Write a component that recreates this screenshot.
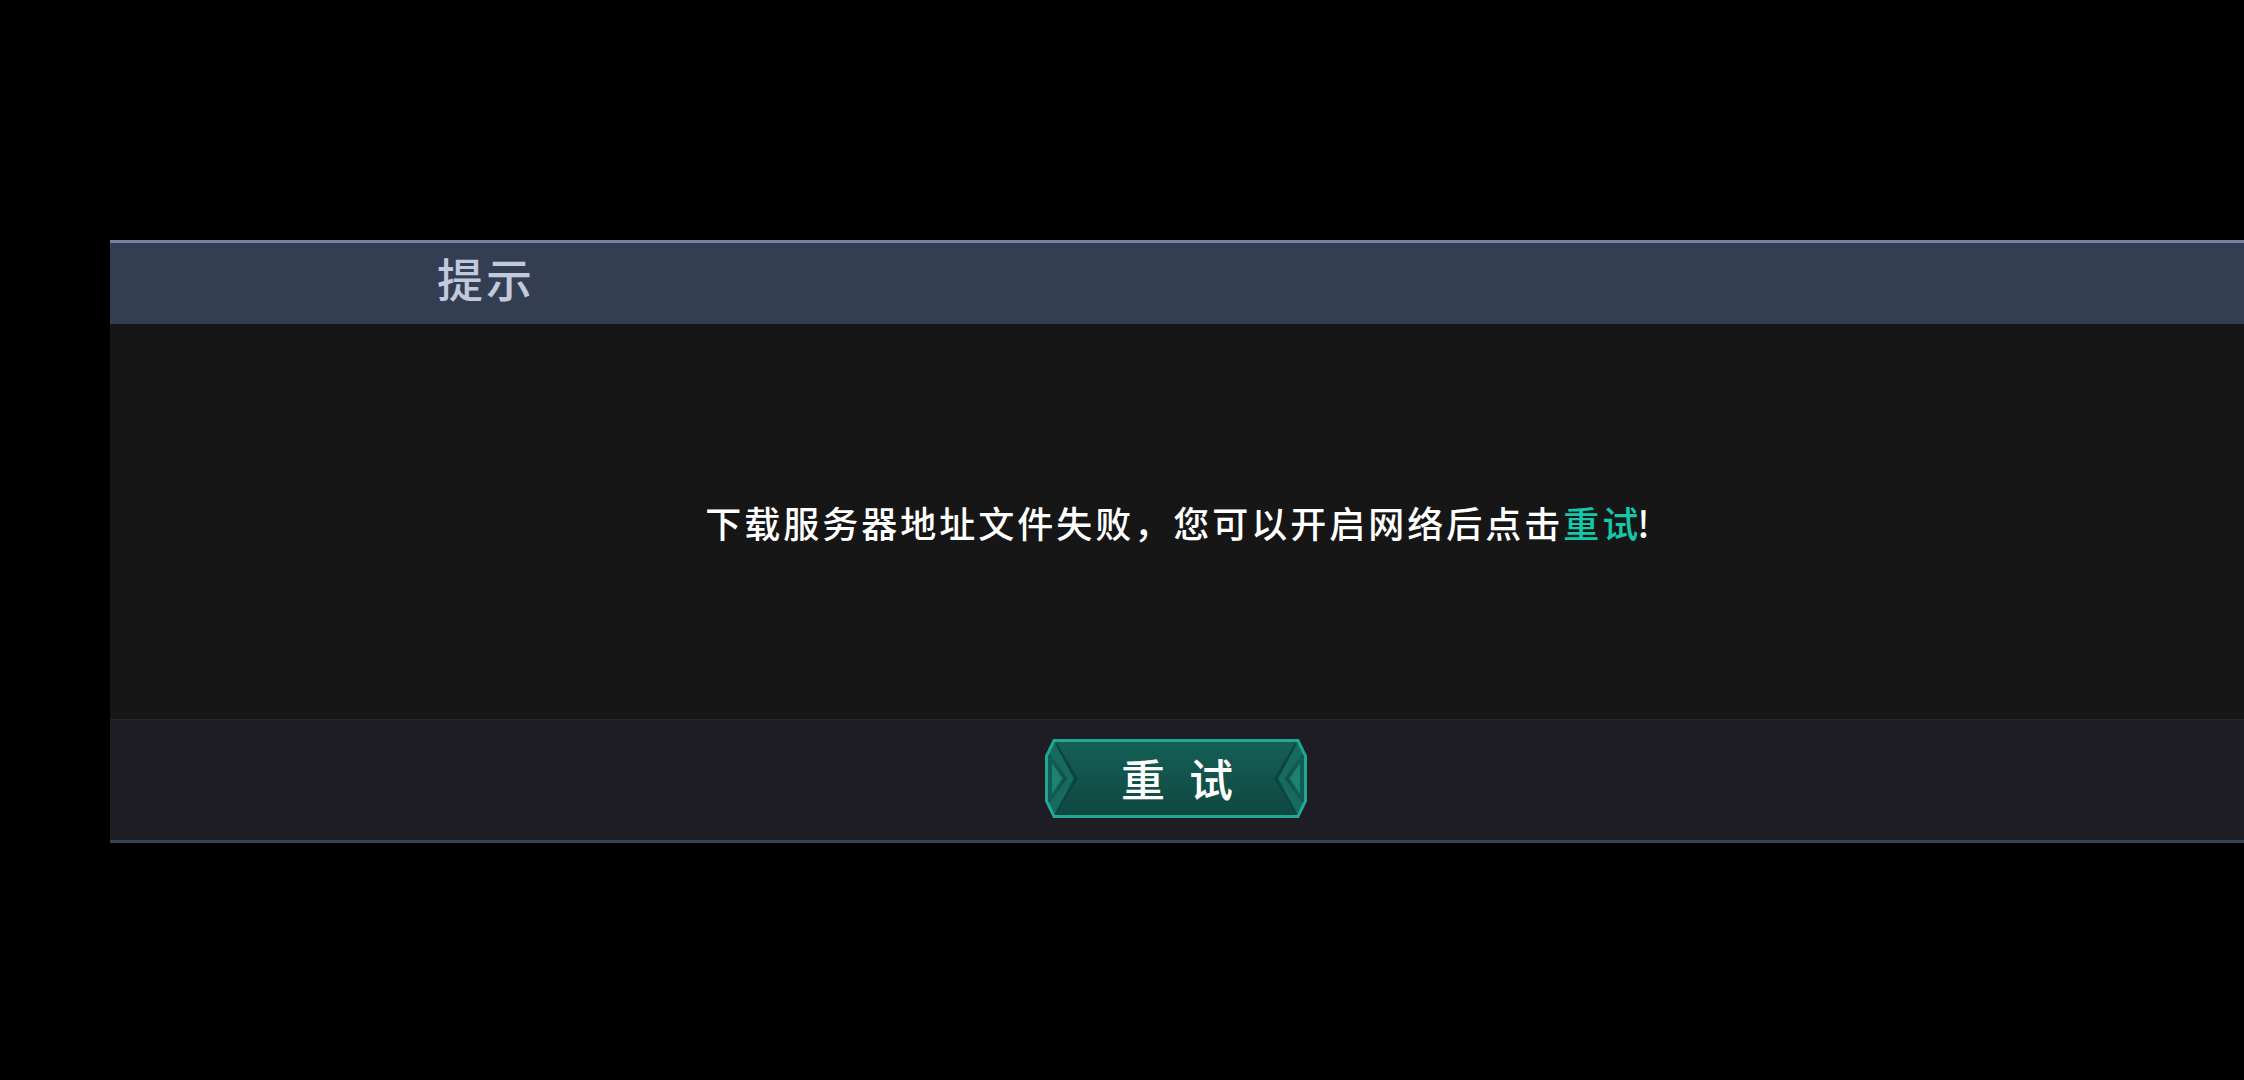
<div class="page">
  <div class="dialog">
    <div class="dialog-title">提示</div>
    <div class="dialog-body">
      <p class="message">下载服务器地址文件失败，您可以开启网络后点击<span class="hl">重试</span>!</p>
    </div>
    <div class="dialog-footer">
      <button class="retry">
        <svg class="retry-bg" viewBox="0 0 262 79" aria-hidden="true">
          <defs>
            <linearGradient id="fill" x1="0" y1="0" x2="0" y2="1">
              <stop offset="0" stop-color="#155f55" />
              <stop offset="1" stop-color="#0e4840" />
            </linearGradient>
          </defs>
          <polygon points="9,1.5 253,1.5 260.5,17 260.5,62 253,77.5 9,77.5 1.5,62 1.5,17" fill="url(#fill)" />
          <!-- left chevrons -->
          <polygon points="11,3 33,39.5 11,76" fill="#0d443d" />
          <polygon points="9,3 29,39.5 9,76 3,62 3,17" fill="#176a5e" />
          <polygon points="3,13 22,39.5 3,66" fill="#0f4f47" />
          <polygon points="3,17 9,20 19,39.5 9,59 3,62" fill="#135c53" />
          <polygon points="7,24 17,39.5 7,55" fill="#1c8271" />
          <!-- right chevrons -->
          <polygon points="251,3 229,39.5 251,76" fill="#0d443d" />
          <polygon points="253,3 233,39.5 253,76 259,62 259,17" fill="#176a5e" />
          <polygon points="259,13 240,39.5 259,66" fill="#0f4f47" />
          <polygon points="259,17 253,20 243,39.5 253,59 259,62" fill="#135c53" />
          <polygon points="255,24 245,39.5 255,55" fill="#1c8271" />
          <polygon points="9,1.5 253,1.5 260.5,17 260.5,62 253,77.5 9,77.5 1.5,62 1.5,17" fill="none" stroke="#1fa896" stroke-width="3" />
        </svg>
        <span class="retry-label">重试</span>
      </button>
    </div>
  </div>
</div>

<style>
  :global(body) {
    margin: 0;
    background: #000;
  }

  .page {
    height: 1080px;
    padding: 240px 0 0 110px;
    box-sizing: border-box;
    background: #000;
    font-family: "Noto Sans CJK SC", "Liberation Serif", serif;
    overflow: hidden;
  }

  .dialog {
    display: flex;
    flex-direction: column;
  }

  .dialog-title {
    height: 81px;
    padding-left: 327px;
    border-top: 3px solid #74829e;
    background: #333e52;
    color: #c0cadb;
    font-size: 46px;
    font-weight: 500;
    letter-spacing: 3px;
    line-height: 68px;
  }

  .dialog-body {
    height: 395px;
    display: flex;
    align-items: center;
    justify-content: center;
    background: #161616;
  }

  .message {
    margin: 0;
    padding-left: 4px;
    color: #fff;
    font-size: 36px;
    font-weight: 500;
    letter-spacing: 3px;
    line-height: 50px;
  }

  .hl {
    margin-right: -4px;
    color: #14c8ac;
  }

  .dialog-footer {
    height: 124px;
    display: flex;
    justify-content: center;
    padding: 19px 2px 0 0;
    box-sizing: border-box;
    border-top: 1px solid #26262c;
    border-bottom: 3px solid #36435c;
    background: #1d1d23;
  }

  .retry {
    position: relative;
    width: 262px;
    height: 79px;
    padding: 0;
    border: none;
    background: none;
    color: #fff;
    font-family: inherit;
    cursor: pointer;
  }

  .retry-bg {
    position: absolute;
    inset: 0;
    width: 100%;
    height: 100%;
  }

  .retry-label {
    position: relative;
    display: block;
    padding-left: 26px;
    font-size: 44px;
    font-weight: 500;
    letter-spacing: 24px;
    line-height: 79px;
  }
</style>
